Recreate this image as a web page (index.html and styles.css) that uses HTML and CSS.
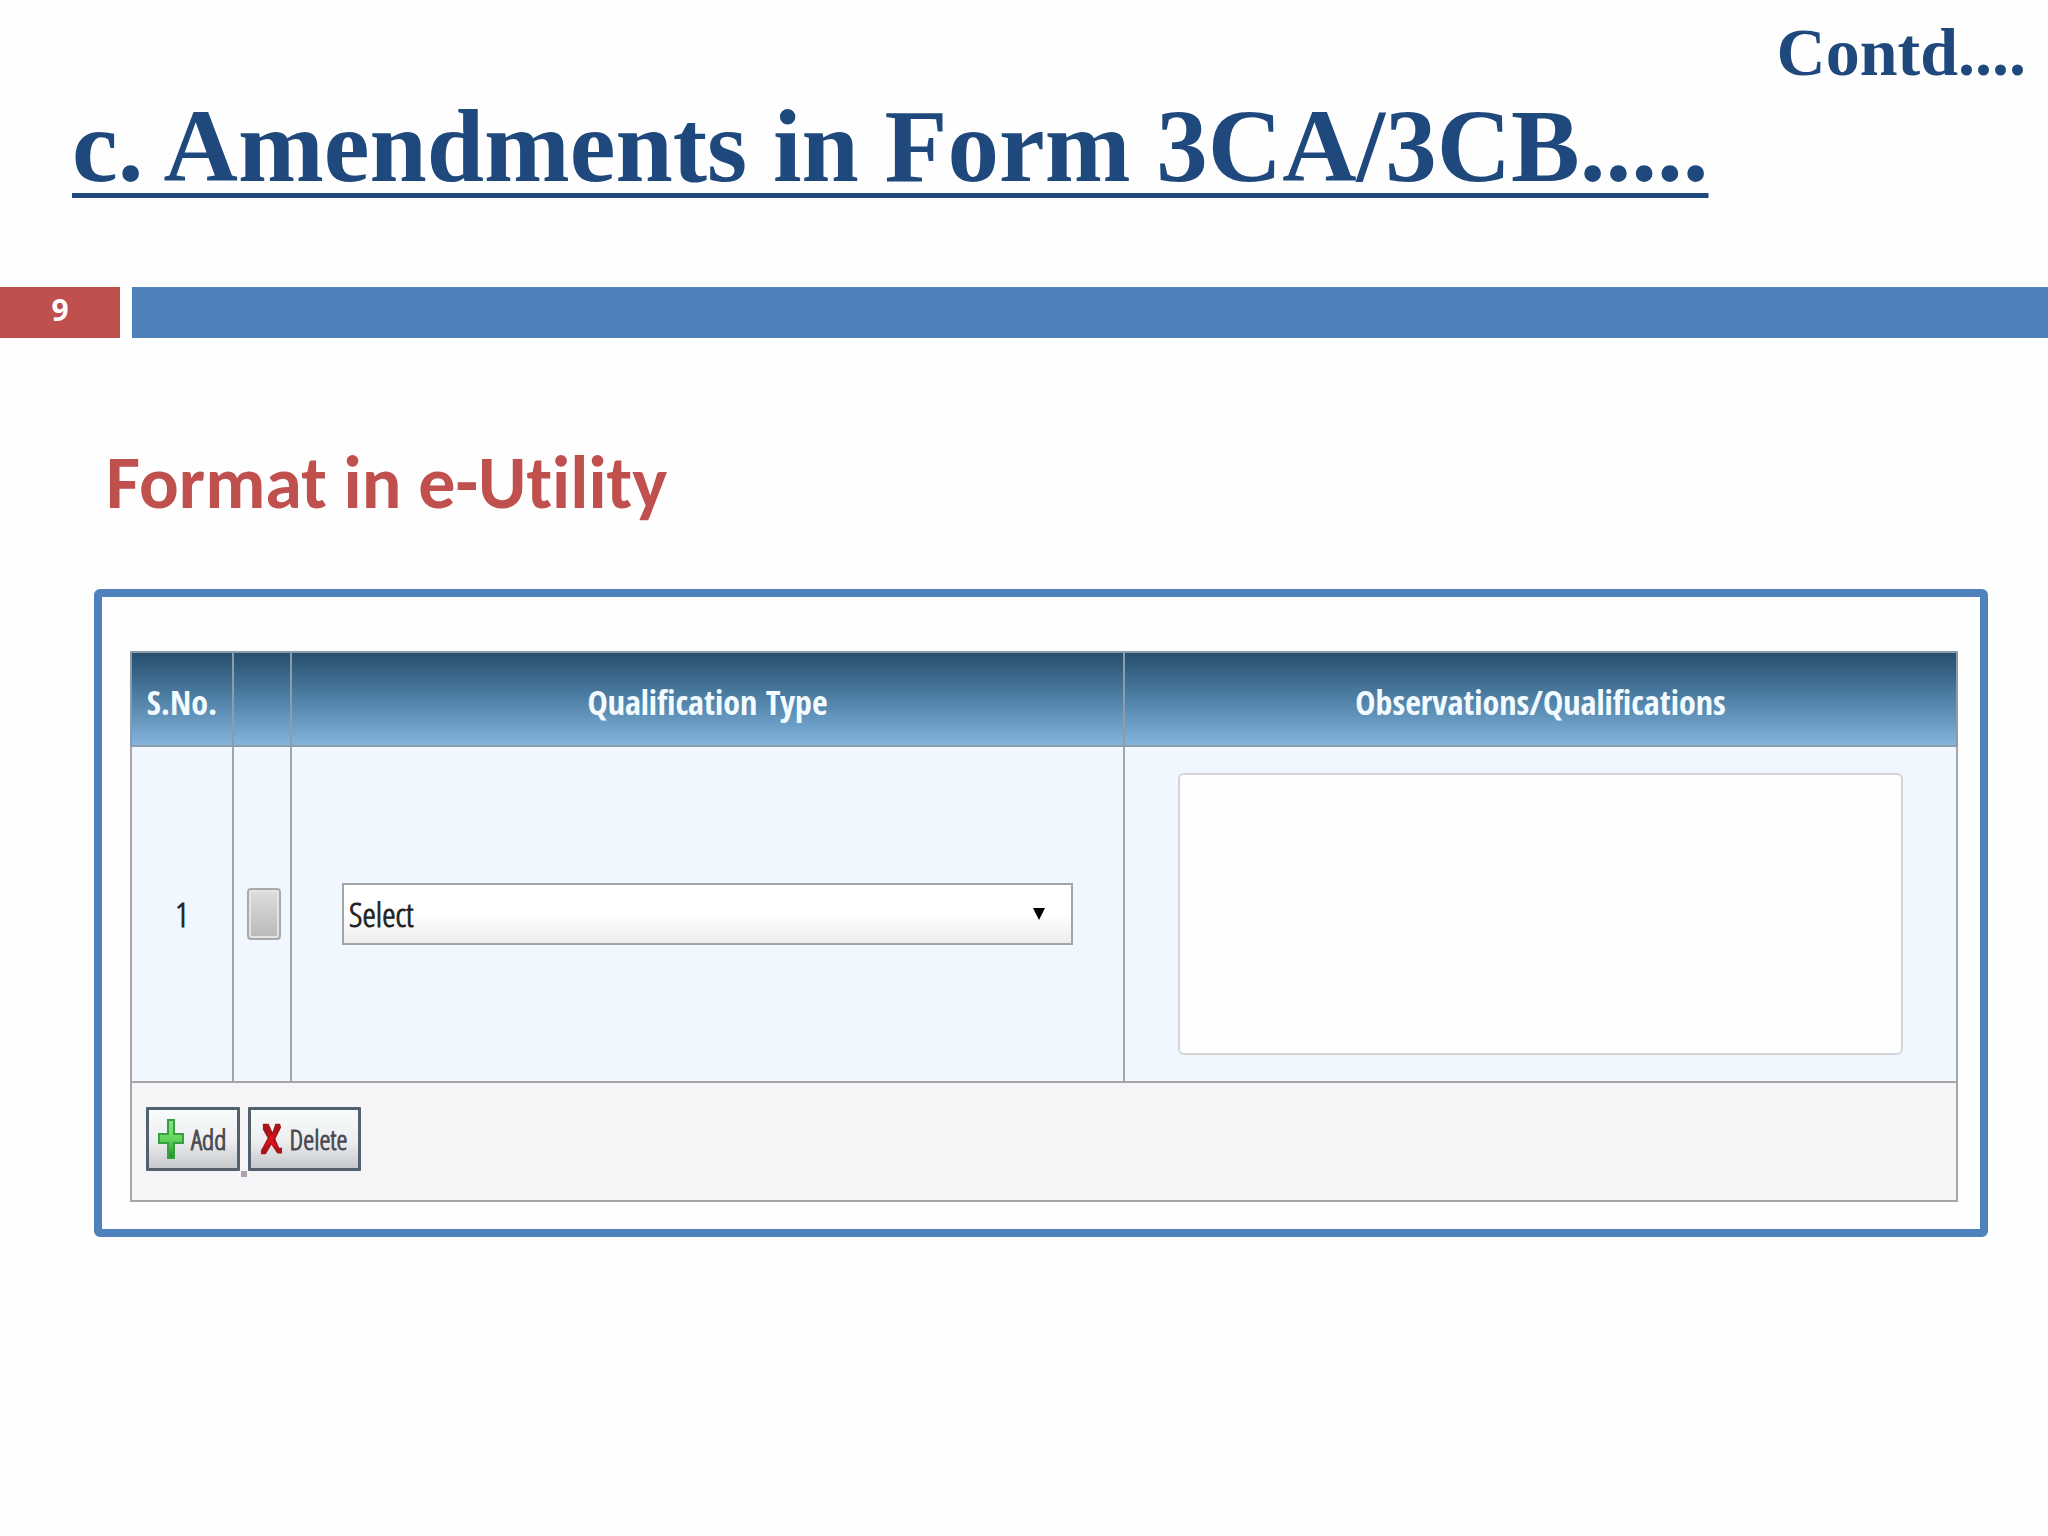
FILE: index.html
```html
<!DOCTYPE html>
<html lang="en">
<head>
  <meta charset="utf-8">
  <meta name="viewport" content="width=device-width, initial-scale=1">
  <title>Amendments in Form 3CA/3CB</title>
  <link rel="stylesheet" href="styles.css">
</head>
<body>
  <header class="slide-header">
    <p class="contd">Contd....</p>
    <h1 class="title">c. Amendments in Form 3CA/3CB.....</h1>
  </header>
  <div class="band">
    <span class="page-number">9</span>
    <span class="band-fill"></span>
  </div>
  <main class="content">
    <h2 class="subtitle">Format in e-Utility</h2>
    <section class="frame">
      <table class="grid">
        <colgroup>
          <col class="col-no">
          <col class="col-check">
          <col>
          <col>
        </colgroup>
        <thead>
          <tr>
            <th scope="col">S.No.</th>
            <th scope="col" aria-label="Choose"></th>
            <th scope="col" id="type-label">Qualification Type</th>
            <th scope="col" id="obs-label">Observations/Qualifications</th>
          </tr>
        </thead>
        <tbody>
          <tr>
            <td class="number">1</td>
            <td class="check-cell"><input class="check" type="checkbox" aria-label="Choose row 1"></td>
            <td class="type-cell">
              <div class="select-wrap">
                <select class="select" aria-labelledby="type-label">
                  <option>Select</option>
                </select>
                <svg class="arrow" viewBox="0 0 12 12" aria-hidden="true"><path d="M0 0h12L6 12z"/></svg>
              </div>
            </td>
            <td class="obs-cell"><textarea class="observations" aria-labelledby="obs-label"></textarea></td>
          </tr>
        </tbody>
        <tfoot>
          <tr>
            <td colspan="4" class="actions-cell">
              <div class="actions">
                <button class="button" type="button">
                  <svg class="icon-add" viewBox="0 0 26 40" aria-hidden="true">
                    <defs>
                      <linearGradient id="green" x1="0" y1="0" x2="0" y2="1">
                        <stop offset="0" stop-color="#8fe08a"/>
                        <stop offset="0.5" stop-color="#62d65c"/>
                        <stop offset="1" stop-color="#1f8f2a"/>
                      </linearGradient>
                    </defs>
                    <path d="M10 1h6v14h9v9h-9v15h-6V24H1v-9h9z" fill="url(#green)" stroke="#36a043" stroke-width="2"/>
                  </svg>
                  Add
                </button>
                <span class="dot"></span>
                <button class="button" type="button">
                  <svg class="icon-delete" viewBox="0 0 24 34" aria-hidden="true">
                    <path d="M3 1h6l4 9 3-9h5l1 4-6 12 4 9h3v6h-5l-6-9-6 10H1v-4l7-13L3 7z" fill="#a8161c"/>
                    <path d="M8 8l4 7 4-5 1 2-4 6 4 7-3 1-3-6-4 5-2-1 5-8z" fill="#e0101c"/>
                  </svg>
                  Delete
                </button>
              </div>
            </td>
          </tr>
        </tfoot>
      </table>
    </section>
  </main>
</body>
</html>
```
FILE: styles.css
```css
* {
  box-sizing: border-box;
}

body {
  margin: 0;
  background: #fefefe;
  font-family: "Open Sans Condensed", "Liberation Sans", sans-serif;
}

.slide-header {
  height: 287px;
  font-family: "Liberation Serif", serif;
  font-weight: bold;
  color: #1f497d;
}

.contd {
  margin: 0;
  padding: 12px 22px 0 0;
  font-size: 68px;
  line-height: 80px;
  text-align: right;
}

.title {
  margin: 0;
  padding-left: 72px;
  font-size: 103px;
  line-height: 108px;
  white-space: nowrap;
  text-decoration: underline;
  text-decoration-thickness: 5px;
  text-underline-offset: 12px;
  text-decoration-skip-ink: none;
}

.band {
  display: flex;
  gap: 12px;
  height: 51px;
}

.page-number {
  width: 120px;
  background: #c0504d;
  color: #fff;
  font: bold 30px/46px "Open Sans", sans-serif;
  text-align: center;
}

.band-fill {
  flex: 1;
  background: #4f81bd;
}

.content {
  padding: 101px 60px 0 94px;
}

.subtitle {
  margin: 0;
  padding: 0 12px 62px;
  font: bold 74px/88px Carlito, Lato, sans-serif;
  font-variant-ligatures: none;
  color: #c0504d;
}

.frame {
  padding: 54px 22px 27px 28px;
  border: 8px solid #4f81bd;
  border-radius: 6px;
}

.grid {
  width: 100%;
  table-layout: fixed;
  border-collapse: collapse;
  border: 2px solid #a3a5a9;
}

.col-no {
  width: 102px;
}

.col-check {
  width: 58px;
}

.grid th,
.grid td {
  padding: 0;
  border: 2px solid #a3a5a9;
}

.grid thead {
  background: linear-gradient(#264e6e, #4b7ba0 45%, #83b5de);
}

.grid th {
  height: 94px;
  padding-top: 6px;
  border-color: #8b9cab;
  color: #f2fbff;
  font-size: 34px;
  line-height: 40px;
}

.grid tbody {
  background: #f1f7fe;
}

.number,
.select,
.button {
  font: 34px/40px "Open Sans Condensed Light", "DejaVu Sans Condensed", sans-serif;
  -webkit-text-stroke: 1px currentColor;
}

.number {
  color: #222;
  text-align: center;
}

.grid .check-cell {
  padding-left: 4px;
}

.check {
  appearance: none;
  display: block;
  width: 34px;
  height: 52px;
  margin: 0 auto;
  border: 2px solid #aaa;
  border-radius: 4px;
  background: linear-gradient(#dedede, #b9b9b9);
  box-shadow: inset 0 0 0 2px #e4e4e4;
}

.grid .type-cell {
  padding: 0 50px;
}

.select-wrap {
  display: grid;
  align-items: center;
}

.select,
.arrow {
  grid-area: 1 / 1;
}

.select {
  appearance: none;
  width: 100%;
  height: 62px;
  padding: 0 5px;
  border: 2px solid #a3a5a9;
  border-radius: 0;
  background: linear-gradient(#fff 50%, #ececec);
  color: #222;
}

.arrow {
  justify-self: end;
  width: 12px;
  height: 12px;
  margin-right: 28px;
  pointer-events: none;
}

.grid .obs-cell {
  padding: 26px 53px;
}

.observations {
  display: block;
  width: 100%;
  height: 282px;
  border: 2px solid #d3d5d6;
  border-radius: 6px;
  background: #fefefe;
  resize: none;
}

.grid tfoot {
  background: #f5f4f6;
}

.grid .actions-cell {
  padding: 24px 14px 29px;
}

.actions {
  display: flex;
  align-items: flex-end;
}

.button {
  display: flex;
  align-items: center;
  gap: 7px;
  height: 64px;
  padding: 0 10px 0 9px;
  border: 3px solid #53616f;
  border-radius: 1px;
  background: linear-gradient(#f8fcfd, #ecedee 55%, #c5c8cc);
  color: #4a4a52;
  font-size: 28px;
}

.dot {
  width: 6px;
  height: 6px;
  margin: 0 1px -6px;
  background: #aaa5ac;
}

.icon-add {
  width: 26px;
  height: 40px;
}

.icon-delete {
  width: 23px;
  height: 34px;
}
```
